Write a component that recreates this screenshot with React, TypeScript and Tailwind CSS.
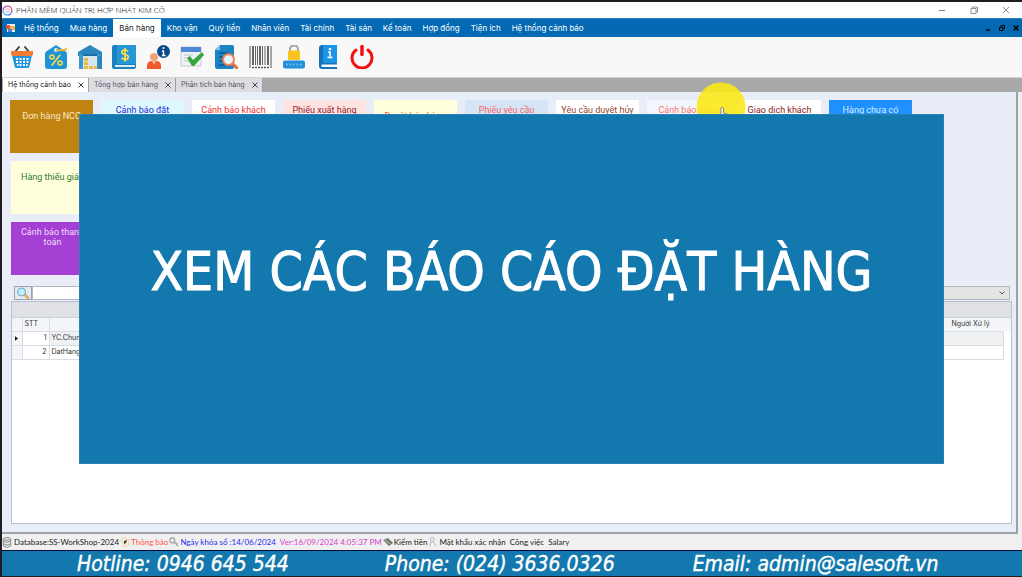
import React, { useState } from "react";
import clsx from "clsx";

const menuItems = [
  "Hệ thống",
  "Mua hàng",
  "Bán hàng",
  "Kho vận",
  "Quỹ tiền",
  "Nhân viên",
  "Tài chính",
  "Tài sản",
  "Kế toán",
  "Hợp đồng",
  "Tiện ích",
  "Hệ thống cảnh báo",
];

const tabs = ["Hệ thống cảnh báo", "Tổng hợp bán hàng", "Phân tích bán hàng"];

const tiles = [
  { label: "Đơn hàng NCC", style: "bg-[#c0830f] text-[#fbe9cf] pt-[11px]" },
  { label: "Cảnh báo đặt hàng", style: "bg-[#dff8ff] text-[#1c2be0] pt-[5px]" },
  { label: "Cảnh báo khách hàng", style: "bg-white text-[#f03030] pt-[5px]" },
  { label: "Phiếu xuất hàng", style: "bg-[#ffe3e1] text-[#96262c] pt-[5px]" },
  { label: "Duyệt bán hàng", style: "bg-[#ffffdc] text-[#f0603c] pt-[11px]" },
  { label: "Phiếu yêu cầu", style: "bg-[#d5e5f6] text-[#fa6464] pt-[5px]" },
  { label: "Yêu cầu duyệt hủy", style: "bg-white text-[#94462f] pt-[5px]" },
  { label: "Cảnh báo hàng", style: "bg-[#f2f7ff] text-[#fa7468] pt-[5px]" },
  { label: "Giao dịch khách", style: "bg-white text-[#8c2020] pt-[5px]" },
  { label: "Hàng chưa có", style: "bg-[#1e90ff] text-[#d8efff] pt-[5px]" },
];

const rows = [
  { id: 1, name: "YC.Chung" },
  { id: 2, name: "DatHang" },
];

/* Toolbar icons */

const BasketIcon = () => (
  <svg viewBox="0 0 24 24" className="size-6">
    <path d="M5 7l4-5M19 7l-4-5" stroke="#444" strokeWidth="2" strokeLinecap="round" />
    <path d="M2 10h20l-2.500 11a2 2 0 0 1-2 2h-11a2 2 0 0 1-2-2z" fill="#2196dc" />
    <path d="M1 6h22v3q0 2-2 2H3q-2 0-2-2z" fill="#f47b34" />
    <path d="M6 13h2v2H6zM9.500 13h2v2h-2zM13 13h2v2h-2zM16.500 13h2v2h-2zM6 16h2v2H6zM9.500 16h2v2h-2zM13 16h2v2h-2zM16.500 16h2v2h-2zM7 19h1.500v2H7zM9.500 19h2v2h-2zM13 19h2v2h-2zM16 19h1.500v2H16z" fill="#fff" />
  </svg>
);

const DiscountIcon = () => (
  <svg viewBox="0 0 24 24" className="size-6">
    <path d="M12 0l9 6q2 1 2 3v12q0 3-3 3H4q-3 0-3-3V9q0-2 2-3z" fill="#1e93d6" />
    <circle cx="12" cy="5" r="2" fill="#d8f0ff" />
    <path d="M12 5q6 1 11-1" stroke="#f2b632" strokeWidth="2" fill="none" />
    <path d="M16 10L8 20" stroke="#ffdc4a" strokeWidth="1.600" strokeLinecap="round" />
    <circle cx="8" cy="12" r="2" stroke="#ffdc4a" strokeWidth="1.500" fill="none" />
    <circle cx="16" cy="18" r="2" stroke="#ffdc4a" strokeWidth="1.500" fill="none" />
  </svg>
);

const WarehouseIcon = () => (
  <svg viewBox="0 0 24 24" className="size-6">
    <path d="M12 0l12 7v4H0V7z" fill="#2b86bd" />
    <path d="M1 9h22v15H1z" fill="#3b98cd" />
    <path d="M5 9h14v15H5z" fill="#d3e6f2" />
    <path d="M5 9h14v2H5z" fill="#1d6d9f" />
    <path d="M6 13h4v3H6zM6 17h4v3H6zM6 21h4v3H6zM11 21h4v3h-4zM16 21h3v3h-3z" fill="#f0b842" />
    <path d="M20 11h4v13h-4z" fill="#3283b8" />
  </svg>
);

const MoneyBookIcon = () => (
  <svg viewBox="0 0 24 24" className="size-6">
    <rect x="0" y="0" width="24" height="24" rx="2" fill="#1c80bd" />
    <path d="M5 0h19v19H5z" fill="#2596d6" />
    <path d="M3 20h20v2H3z" fill="#d9e9f2" />
    <path d="M16 6.500q-1-1.500-3-1.500-3 0-3 2.300 0 1.700 3 2.200 3.300.5 3.300 2.500 0 2.500-3.300 2.500-2.300 0-3.300-1.700M13 3v13.500" stroke="#ffe04a" strokeWidth="1.700" fill="none" />
  </svg>
);

const UserInfoIcon = () => (
  <svg viewBox="0 0 24 24" className="size-6">
    <circle cx="8" cy="12" r="4" fill="#f6a076" />
    <path d="M1 24v-3q0-5 5-5h4q5 0 5 5v3z" fill="#f05a2c" />
    <path d="M6 16h4l-2 4z" fill="#f9b896" />
    <circle cx="17.500" cy="6.500" r="6.500" fill="#0d4c8c" />
    <path d="M17.500 5.500v5M16 6h1.500M16 10.500h3.500" stroke="#fff" strokeWidth="1.400" />
    <circle cx="17.500" cy="3" r="1" fill="#fff" />
  </svg>
);

const ApproveIcon = () => (
  <svg viewBox="0 0 24 24" className="size-6">
    <path d="M1 2h20v19H1z" fill="#eef0f4" stroke="#c6ccd8" />
    <path d="M1 2h20v5H1z" fill="#4f86d6" />
    <path d="M4 10h9M4 13h6M4 16h5" stroke="#c0c6d0" />
    <path d="M7 13l3-2 3 4 9-8 2 3-10 11h-2z" fill="#35a73a" />
  </svg>
);

const ReportSearchIcon = () => (
  <svg viewBox="0 0 24 24" className="size-6">
    <path d="M6 0h12q2 0 2 2v20q0 2-2 2H3q-2 0-2-2V5z" fill="#1c83c4" />
    <path d="M6 0v5H1z" fill="#7fc2e8" />
    <path d="M5 8h10M5 12h5M5 16h4M5 20h6" stroke="#0d5890" strokeWidth="1.500" />
    <path d="M18 18l5 5" stroke="#ef6b2d" strokeWidth="3" strokeLinecap="round" />
    <circle cx="14.500" cy="14.500" r="5.500" fill="#e6f4fb" stroke="#f58049" strokeWidth="2" />
  </svg>
);

const BarcodeIcon = () => (
  <svg viewBox="0 0 24 24" className="size-6">
    <path d="M2 1v22M23 1v22" stroke="#555" strokeWidth="1" />
    <path d="M5 1v19M12 1v19M20 1v19" stroke="#444" strokeWidth="1.600" />
    <path d="M7.500 1v19M9.500 1v19M14.500 1v19M17 1v19" stroke="#666" strokeWidth="1" />
    <path d="M4 22.500h17" stroke="#555" strokeWidth="1.500" strokeDasharray="2 1" />
  </svg>
);

const PasswordIcon = () => (
  <svg viewBox="0 0 24 24" className="size-6">
    <path d="M8 7V4q0-3.500 4-3.500T16 4v3" stroke="#a4a8ac" strokeWidth="2" fill="none" />
    <rect x="6" y="5.500" width="12" height="9.500" rx="1.500" fill="#fcc21e" />
    <rect x="1" y="15.500" width="22" height="8" rx="2" fill="#2190dc" />
    <path d="M4 19.500h16" stroke="#6ab8e8" strokeWidth="2" strokeDasharray="2 1.500" />
  </svg>
);

const GuideIcon = () => (
  <svg viewBox="0 0 24 24" className="size-6">
    <path d="M3 3q0-3 3-3h15v24H6q-3 0-3-3z" fill="#1671b8" />
    <path d="M7 0h14v18H7z" fill="#1c95e8" />
    <path d="M6 19.500h15V22H6q-1.500-1.200 0-2.500z" fill="#f4f8fc" />
    <path d="M12 7h2v5M11.500 12.500h5" stroke="#fff" strokeWidth="1.600" fill="none" />
    <circle cx="14" cy="4" r="1.300" fill="#fff" />
  </svg>
);

const PowerIcon = () => (
  <svg viewBox="0 0 24 24" className="size-6">
    <path d="M6 5a10 10 0 1 0 12 0" stroke="#f40f0f" strokeWidth="3" strokeLinecap="round" fill="none" />
    <path d="M12 1.500v8" stroke="#f40f0f" strokeWidth="3.500" strokeLinecap="round" />
  </svg>
);

const toolbar = [
  { name: "Bán hàng", Icon: BasketIcon },
  { name: "Khuyến mãi", Icon: DiscountIcon },
  { name: "Kho", Icon: WarehouseIcon },
  { name: "Công nợ", Icon: MoneyBookIcon },
  { name: "Khách hàng", Icon: UserInfoIcon },
  { name: "Duyệt", Icon: ApproveIcon },
  { name: "Báo cáo", Icon: ReportSearchIcon },
  { name: "Mã vạch", Icon: BarcodeIcon },
  { name: "Mật khẩu", Icon: PasswordIcon },
  { name: "Hướng dẫn", Icon: GuideIcon },
  { name: "Thoát", Icon: PowerIcon },
];

const TitleBar = () => (
  <header className="flex h-4 items-center bg-white font-['Open_Sans',sans-serif] text-black">
    <svg viewBox="0 0 12 12" className="mr-[3px] size-[11px]" fill="none" strokeWidth="1.600">
      <path d="M6 1.200A4.800 4.800 0 0 1 10.800 6" stroke="#e8628c" />
      <path d="M10.800 6A4.800 4.800 0 0 1 6 10.800" stroke="#6e7df0" />
      <path d="M6 10.800A4.800 4.800 0 0 1 1.200 6" stroke="#4fb4e6" />
      <path d="M1.200 6A4.800 4.800 0 0 1 6 1.200" stroke="#a866d8" />
      <circle cx="6" cy="6" r="2" stroke="#f0a8a0" strokeWidth="1" />
    </svg>
    <h1 className="text-[8px] leading-4 font-light">PHẦN MỀM QUẢN TRỊ HỢP NHẤT KIM CÔ</h1>
    <div className="ml-auto flex items-center gap-6 pr-3 text-[#777]">
      <button aria-label="Thu nhỏ">
        <svg viewBox="0 0 8 8" className="size-2" stroke="currentColor">
          <path d="M1 4.500h6" />
        </svg>
      </button>
      <button aria-label="Khôi phục">
        <svg viewBox="0 0 8 8" className="size-2" fill="none" stroke="currentColor" strokeWidth=".8">
          <path d="M1 2.500h5v5H1zM2.500 2.500v-1.500h5v5H6" />
        </svg>
      </button>
      <button aria-label="Đóng">
        <svg viewBox="0 0 8 8" className="size-2" stroke="currentColor" strokeWidth=".8">
          <path d="M1 1l6 6M7 1L1 7" />
        </svg>
      </button>
    </div>
  </header>
);

const MenuBar = () => (
  <nav className="flex h-[19px] items-center gap-px border-t border-[#2c7dbb] bg-[#0369b3] pl-1 text-[8px] text-white">
    <svg viewBox="0 0 10 10" className="mr-[2px] size-[10px]">
      <path d="M1 1h8v8H1z" fill="#e9edf2" />
      <path d="M0 2h4v4H0z" fill="#d8563c" />
      <path d="M4 3h5v4H4z" fill="#f2b44a" />
      <path d="M2 6h4v3H2z" fill="#4a84cc" />
    </svg>
    {menuItems.map((item) => (
      <button
        key={item}
        className={clsx(
          "h-[18px] whitespace-nowrap",
          item === "Bán hàng" ? "bg-white px-[6px] text-[#222]" : "px-[5px]"
        )}
      >
        {item}
      </button>
    ))}
    <div className="ml-auto flex items-center gap-2 pr-[3px] text-black">
      <button aria-label="Thu nhỏ cửa sổ">
        <svg viewBox="0 0 6 6" className="size-[6px]" stroke="currentColor" strokeWidth="1.500">
          <path d="M1 5h4" />
        </svg>
      </button>
      <button aria-label="Khôi phục cửa sổ">
        <svg viewBox="0 0 6 6" className="size-[6px]" fill="none" stroke="currentColor">
          <path d="M.5 2.500h3.500v3H.5zM2 2.500v-2h3.500v3H4" />
        </svg>
      </button>
      <button aria-label="Đóng cửa sổ">
        <svg viewBox="0 0 6 6" className="size-[6px]" stroke="currentColor" strokeWidth="1.500">
          <path d="M.5.5l5 5M5.500.5l-5 5" />
        </svg>
      </button>
    </div>
  </nav>
);

const StatusBar = () => (
  <div className="flex h-4 items-center bg-[#f0f0f0] font-[Lato,sans-serif] text-[8px] whitespace-nowrap text-[#222]">
    <svg viewBox="0 0 10 12" className="mr-[2px] h-[11px] w-[10px]" fill="#e4e4e4" stroke="#777" strokeWidth=".8">
      <path d="M1 2v8q4 2.500 8 0V2M1 4.500q4 2.500 8 0M1 7.500q4 2.500 8 0" />
      <ellipse cx="5" cy="2" rx="4" ry="1.500" />
    </svg>
    <span>Database:SS-WorkShop-2024</span>
    <svg viewBox="0 0 10 10" className="mx-px size-[10px]">
      <path d="M1 3l3-3 5 3v5L4 10z" fill="#f7ead6" stroke="#d8c4a8" strokeWidth=".6" />
      <path d="M4 4l3-1-1 3-2 1z" fill="#503020" />
    </svg>
    <span className="text-[#ff5248]">Thông báo</span>
    <svg viewBox="0 0 12 12" className="mx-px size-[10px]" fill="none" stroke="#999" strokeWidth="1.400">
      <circle cx="4" cy="4" r="3" />
      <path d="M6 6l5 5M8 8l2-1" />
    </svg>
    <span className="text-[#2c2cf0]">Ngày khóa sổ :14/06/2024</span>
    <span className="ml-1 text-[#d83cd0]">Ver:16/09/2024 4:05:37 PM</span>
    <svg viewBox="0 0 10 10" className="mx-px size-[10px]">
      <path d="M0 3l5-2 5 5-4 3z" fill="#71786f" />
      <path d="M2 3l5 4" stroke="#c8cec4" />
    </svg>
    <span>Kiểm tiền</span>
    <svg viewBox="0 0 10 12" className="mx-px size-[10px]" fill="none" stroke="#aaa">
      <circle cx="4" cy="3" r="2.500" />
      <path d="M3 6L1 11M5 6l4 5" />
    </svg>
    <span>Mật khẩu xác nhận</span>
    <span className="ml-1">Công việc</span>
    <span className="ml-1">Salary</span>
  </div>
);

const AlertTile = ({ label, style }: { label: string; style: string }) => (
  <button
    className={clsx(
      "flex h-[53px] w-[83px] items-start justify-center px-1 text-center font-[Roboto,sans-serif] text-[9px] leading-[10px]",
      style
    )}
  >
    {label}
  </button>
);

const App = () => {
  const [activeTab, setActiveTab] = useState(tabs[0]);
  const [keyword, setKeyword] = useState("");

  return (
    <div className="relative flex min-h-screen flex-col border-t-2 border-b border-l-2 border-[#201d22] bg-[#f0f0f0] font-[Inter,sans-serif]">
      <TitleBar />
      <MenuBar />

      {/* Toolbar */}
      <div className="flex h-[41px] items-center gap-[10px] border-b border-[#d4d4d4] bg-[#f8f8f8] pl-2">
        {toolbar.map(({ name, Icon }) => (
          <button key={name} aria-label={name}>
            <Icon />
          </button>
        ))}
      </div>

      {/* Tabs */}
      <div className="flex h-[14px] bg-[#a9a9a9] pl-px text-[7px]">
        {tabs.map((tab) => (
          <div
            key={tab}
            className={clsx(
              "flex items-center border-r border-[#a0a0a8]",
              tab === activeTab ? "bg-white text-[#222]" : "bg-[#dcdce2] text-[#555]"
            )}
          >
            <button className="pr-[7px] pl-[5px]" onClick={() => setActiveTab(tab)}>
              {tab}
            </button>
            <button className="pr-1" aria-label={`Đóng ${tab}`}>
              <svg viewBox="0 0 6 6" className="size-[6px]" stroke="#444">
                <path d="M.5.5l5 5M5.500.5l-5 5" />
              </svg>
            </button>
          </div>
        ))}
      </div>

      {/* Workspace */}
      <main className="mr-1 flex flex-1 flex-col border-r-2 border-b-2 border-[#9fa0a8] bg-[#e8edf7] pt-2 pr-1 pb-2 pl-2">
        <div className="flex gap-2">
          {tiles.map((tile) => (
            <AlertTile key={tile.label} {...tile} />
          ))}
        </div>
        <div className="mt-2 ml-px flex flex-col gap-2">
          <AlertTile label="Hàng thiếu giá bán" style="bg-[#ffffdc] text-[#2f7d32] pt-[11px] pl-4 whitespace-nowrap" />
          <AlertTile label="Cảnh báo thanh toán" style="bg-[#a540d4] text-[#f1dcfa] pt-[5px]" />
        </div>

        {/* Search row */}
        <div className="mt-[11px] mr-[2px] ml-1 flex h-[14px]">
          <button aria-label="Tìm kiếm" className="border border-[#9aa2ae] bg-[#e6eaf0] px-px">
            <svg viewBox="0 0 14 12" className="h-3 w-[14px]">
              <path d="M8 7l4 4" stroke="#e8a860" strokeWidth="2.500" strokeLinecap="round" />
              <circle cx="5.500" cy="5" r="4" fill="#c4ecfa" stroke="#62a8cc" />
            </svg>
          </button>
          <input
            aria-label="Từ khóa"
            value={keyword}
            onChange={(e) => setKeyword(e.target.value)}
            className="w-1/2 border border-[#b4b8c0] bg-white px-1 text-[8px] outline-none"
          />
          <div className="relative flex flex-1">
            <select aria-label="Trạng thái" className="block h-[14px] w-full appearance-none border border-[#b4b8c0] bg-[#e4e4e4] text-[8px]">
              <option></option>
            </select>
            <svg viewBox="0 0 8 6" className="pointer-events-none absolute top-1 right-1 h-[6px] w-2" fill="none" stroke="#555">
              <path d="M1.500 1.500L4 4l2.500-2.500" />
            </svg>
          </div>
        </div>

        {/* Grid */}
        <div className="mt-px ml-px flex-1 border border-[#b8c0d0] bg-white">
          <div className="h-4 border-b border-[#cdd2da] bg-[#dfe1e6]" />
          <table className="w-full table-fixed border-collapse text-[7px] leading-[10px] text-[#333]">
            <thead>
              <tr className="h-[13px] bg-[#f4f5f8] text-left">
                <th className="w-[10px] border-r border-[#d8dce4]" />
                <th className="w-[27px] border-r border-[#d8dce4] px-[2px] font-normal">STT</th>
                <th className="border-r border-[#d8dce4]" />
                <th className="w-[60px] px-2 font-normal whitespace-nowrap">Người Xử lý</th>
                <th className="w-2" />
              </tr>
            </thead>
            <tbody>
              {rows.map((row) => (
                <tr key={row.id} className="h-[14px]">
                  <td className="border border-l-0 border-[#d8dce4] bg-[#f4f5f8]">
                    {row.id === 1 && (
                      <svg viewBox="0 0 4 6" className="ml-[3px] h-[5px] w-[3px]">
                        <path d="M0 0l4 3-4 3z" fill="#111" />
                      </svg>
                    )}
                  </td>
                  <td className="border border-[#d8dce4] px-[2px] text-right">{row.id}</td>
                  <td className={clsx("border border-[#d8dce4] px-[2px]", row.id === 1 && "bg-[#f0f1f3]")}>
                    {row.name}
                  </td>
                  <td className={clsx("border border-[#d8dce4]", row.id === 1 && "bg-[#f0f1f3]")} />
                  <td />
                </tr>
              ))}
            </tbody>
          </table>
        </div>
      </main>

      <StatusBar />

      {/* Contact strip */}
      <footer className="flex h-[26px] items-center border-t border-[#0a0a3c] bg-[#1278ad] pl-[75px] font-['DejaVu_Sans_Condensed','DejaVu_Sans',sans-serif] text-[21px] leading-6 whitespace-nowrap text-white italic [-webkit-text-stroke:0.4px_white]">
        <p>Hotline: 0946 645 544</p>
        <p className="ml-24">Phone: (024) 3636.0326</p>
        <p className="ml-[78px]">Email: admin@salesoft.vn</p>
      </footer>

      {/* Pointer highlight */}
      <svg viewBox="0 0 50 50" className="absolute top-[80px] left-[694px] size-[50px]">
        <circle cx="25" cy="25" r="24.500" fill="#fbe914" fillOpacity=".88" />
        <path d="M25 37v-11q1.500-1.500 2.500 0v5l5 1.500v6h-7l-3-4z" fill="#fff" stroke="#666" strokeWidth=".8" />
      </svg>

      {/* Caption panel */}
      <section className="absolute top-28 right-[78px] left-[77px] flex h-[350px] items-center justify-center border border-[#2a80b5] bg-[#1278ad]">
        <h2 className="pb-9 font-['DejaVu_Sans_Condensed','DejaVu_Sans',sans-serif] text-[53px] leading-none whitespace-nowrap text-white [-webkit-text-stroke:1px_white]">
          XEM CÁC BÁO CÁO ĐẶT HÀNG
        </h2>
      </section>
    </div>
  );
};

export default App;
